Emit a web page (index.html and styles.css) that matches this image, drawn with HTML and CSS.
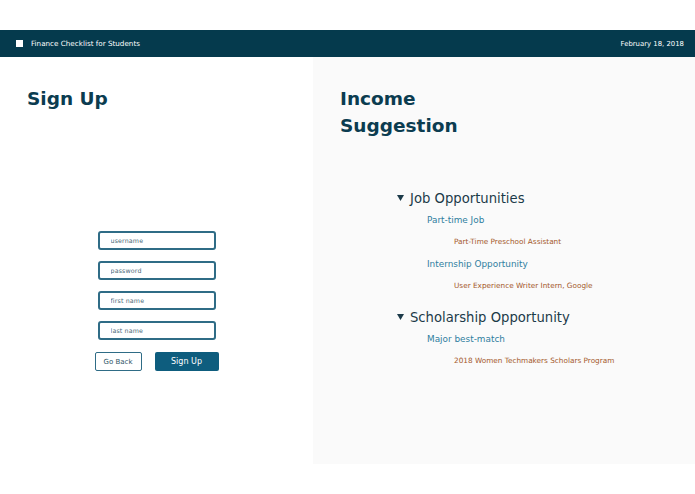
FILE: index.html
```html
<!DOCTYPE html>
<html lang="en">
<head>
<meta charset="utf-8">
<title>Finance Checklist for Students</title>
<link rel="stylesheet" href="styles.css">
</head>
<body>
<div class="page">
  <header class="topbar">
    <div class="brand"><span class="brand-box"></span><span>Finance Checklist for Students</span></div>
    <div class="date">February 18, 2018</div>
  </header>
  <main class="main">
    <section class="signup">
      <h1 class="title">Sign Up</h1>
      <form class="form">
        <input class="field" type="text" placeholder="username">
        <input class="field" type="password" placeholder="password">
        <input class="field" type="text" placeholder="first name">
        <input class="field" type="text" placeholder="last name">
        <div class="actions">
          <button type="button" class="btn btn-outline">Go Back</button>
          <button type="button" class="btn btn-fill">Sign Up</button>
        </div>
      </form>
    </section>
    <section class="income">
      <h1 class="title title-narrow">Income Suggestion</h1>
      <div class="tree">
        <div class="group">
          <div class="group-head"><svg class="tri" viewBox="0 0 7 6" width="7" height="6"><polygon points="0,0 7,0 3.5,6" fill="#1c3a49"/></svg><span>Job Opportunities</span></div>
          <div class="sub">Part-time Job</div>
          <div class="item">Part-Time Preschool Assistant</div>
          <div class="sub">Internship Opportunity</div>
          <div class="item">User Experience Writer Intern, Google</div>
        </div>
        <div class="group">
          <div class="group-head"><svg class="tri" viewBox="0 0 7 6" width="7" height="6"><polygon points="0,0 7,0 3.5,6" fill="#1c3a49"/></svg><span>Scholarship Opportunity</span></div>
          <div class="sub">Major best-match</div>
          <div class="item">2018 Women Techmakers Scholars Program</div>
        </div>
      </div>
    </section>
  </main>
</div>
</body>
</html>
```
FILE: styles.css
```css
* { box-sizing: border-box; }
html, body { margin: 0; padding: 0; background: #ffffff; }
body { font-family: "DejaVu Sans", "Liberation Sans", sans-serif; }
.page { padding-top: 30px; }
.topbar {
  height: 27px;
  background: #053a4d;
  display: flex;
  align-items: center;
  justify-content: space-between;
  padding: 0 11px 0 16px;
  color: #ffffff;
  font-size: 7.2px;
}
.brand { display: flex; align-items: center; gap: 8px; }
.brand-box { width: 7px; height: 7px; background: #ffffff; display: block; }
.date { font-size: 6.9px; }
.main { display: flex; height: 407px; }
.signup { width: 313px; padding: 28px 27px 0; }
.income { flex: 1; background: #fafafa; padding: 28px 27px 0; }
.title {
  margin: 0;
  font-size: 18.5px;
  line-height: 27px;
  font-weight: bold;
  color: #0b3c50;
}
.title-narrow { max-width: 140px; }
.form {
  margin-top: 119px;
  display: flex;
  flex-direction: column;
  align-items: center;
  gap: 11px;
}
.field {
  width: 118px;
  height: 19px;
  border: 2px solid #2f6c86;
  border-radius: 3px;
  padding: 0 0 0 11px;
  font-family: "DejaVu Sans", "Liberation Sans", sans-serif;
  font-size: 6.3px;
  letter-spacing: 0.15px;
  color: #3b5d6c;
  background: #ffffff;
  outline: none;
}
.field::placeholder { color: #4c6b79; }
.actions { display: flex; gap: 13px; margin-top: 1px; }
.btn {
  height: 19px;
  border-radius: 2px;
  font-family: "DejaVu Sans", "Liberation Sans", sans-serif;
  padding: 0;
  cursor: pointer;
}
.btn-outline {
  width: 47px;
  border: 1px solid #2f6c86;
  background: #ffffff;
  color: #2e5466;
  font-size: 7px;
}
.btn-fill {
  width: 64px;
  border: none;
  background: #0e5d7e;
  color: #ffffff;
  font-size: 8px;
}
.tree { margin-top: 48px; padding-left: 57px; }
.group + .group { margin-top: 9px; }
.group-head {
  display: flex;
  align-items: center;
  gap: 6px;
  height: 22px;
  font-size: 13.2px;
  color: #1c3a49;
}
.tri { display: block; margin-top: -1px; }
.sub {
  height: 22px;
  line-height: 22px;
  padding-left: 30px;
  font-size: 8.9px;
  color: #2f7ea0;
}
.item {
  height: 22px;
  line-height: 22px;
  padding-left: 57px;
  font-size: 7.3px;
  color: #a4592a;
}
```
